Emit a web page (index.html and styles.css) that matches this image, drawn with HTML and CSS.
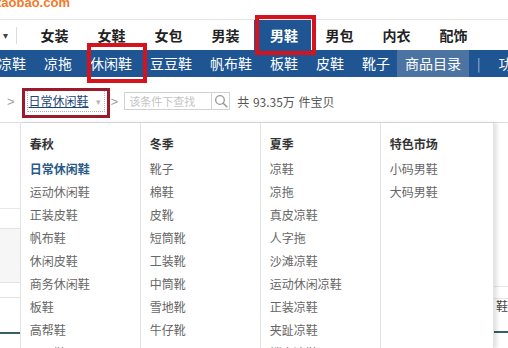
FILE: index.html
```html
<!DOCTYPE html>
<html lang="zh-CN">
<head>
<meta charset="utf-8">
<title>淘宝 男鞋</title>
<link rel="stylesheet" href="styles.css">
</head>
<body>
<div class="page">
  <div class="logo"><span class="logo-text">taobao.com</span></div>

  <div class="cats">
    <span class="cats-arrow">▾</span>
    <span class="cats-sep"></span>
    <ul class="cats-list">
      <li>女装</li>
      <li>女鞋</li>
      <li>女包</li>
      <li>男装</li>
      <li class="on">男鞋</li>
      <li>男包</li>
      <li>内衣</li>
      <li>配饰</li>
    </ul>
  </div>

  <ul class="subnav">
    <li class="first">凉鞋</li>
    <li>凉拖</li>
    <li class="sel">休闲鞋</li>
    <li>豆豆鞋</li>
    <li>帆布鞋</li>
    <li>板鞋</li>
    <li>皮鞋</li>
    <li>靴子</li>
    <li class="catalog">商品目录</li>
    <li class="pipe">|</li>
    <li>功</li>
  </ul>

  <div class="crumbs">
    <span class="gt">&gt;</span>
    <span class="select"><span class="select-text">日常休闲鞋</span><span class="select-arrow">▾</span></span>
    <span class="gt gt2">&gt;</span>
    <span class="search">
      <span class="search-input">该条件下查找</span>
      <span class="search-btn">
        <svg width="14" height="14" viewBox="0 0 14 14"><circle cx="6" cy="6" r="4.3" fill="none" stroke="#9a9a9a" stroke-width="1.3"/><line x1="9.2" y1="9.2" x2="12.8" y2="12.8" stroke="#9a9a9a" stroke-width="1.6" stroke-linecap="round"/></svg>
      </span>
    </span>
    <span class="total">共 93.35万 件宝贝</span>
  </div>

  <div class="main">
    <div class="under-left">
      <div class="ul-a"></div>
      <div class="ul-b"></div>
      <div class="ul-c"></div>
      <div class="ul-d"></div>
      <div class="ul-e"></div>
      <div class="ul-f"></div>
    </div>

    <div class="panel">
      <div class="col">
        <h3 class="col-head">春秋</h3>
        <ul class="col-list">
          <li class="cur">日常休闲鞋</li>
          <li>运动休闲鞋</li>
          <li>正装皮鞋</li>
          <li>帆布鞋</li>
          <li>休闲皮鞋</li>
          <li>商务休闲鞋</li>
          <li>板鞋</li>
          <li>高帮鞋</li>
          <li>豆豆鞋</li>
        </ul>
      </div>
      <div class="col">
        <h3 class="col-head">冬季</h3>
        <ul class="col-list">
          <li>靴子</li>
          <li>棉鞋</li>
          <li>皮靴</li>
          <li>短筒靴</li>
          <li>工装靴</li>
          <li>中筒靴</li>
          <li>雪地靴</li>
          <li>牛仔靴</li>
        </ul>
      </div>
      <div class="col">
        <h3 class="col-head">夏季</h3>
        <ul class="col-list">
          <li>凉鞋</li>
          <li>凉拖</li>
          <li>真皮凉鞋</li>
          <li>人字拖</li>
          <li>沙滩凉鞋</li>
          <li>运动休闲凉鞋</li>
          <li>正装凉鞋</li>
          <li>夹趾凉鞋</li>
          <li>镂空凉鞋</li>
        </ul>
      </div>
      <div class="col">
        <h3 class="col-head">特色市场</h3>
        <ul class="col-list">
          <li>小码男鞋</li>
          <li>大码男鞋</li>
        </ul>
      </div>
    </div>

    <div class="under-right">
      <div class="ur-a"></div>
      <div class="ur-b"></div>
      <div class="ur-c">鞋</div>
      <div class="ur-d"></div>
    </div>
  </div>

  <div class="mark mark-nanxie"></div>
  <div class="mark mark-xiuxian"></div>
  <div class="mark dark mark-crumb"></div>
  <div class="mark dark mark-chunqiu"></div>
</div>
</body>
</html>
```

FILE: styles.css
```css
* { box-sizing: border-box; }
html, body { margin: 0; padding: 0; background: #fff; }
body {
  width: 508px;
  height: 348px;
  overflow: hidden;
  font-family: "Noto Sans CJK SC", "Noto Sans", sans-serif;
  color: #333;
}
ul { list-style: none; margin: 0; padding: 0; }
h3 { margin: 0; }

.page { position: relative; width: 508px; height: 348px; overflow: hidden; }

/* logo */
.logo { height: 19px; overflow: hidden; }
.logo-text {
  display: block;
  margin: -4px 0 0 -3px;
  font-family: "Liberation Sans", Arial, sans-serif;
  font-weight: bold;
  font-size: 13px;
  line-height: 13px;
  color: #f07a2a;
}

/* top categories */
.cats {
  height: 31px;
  border-top: 1px solid #e6e6e6;
  display: flex;
  align-items: center;
  padding-left: 1px;
}
.cats-arrow { width: 8px; font-size: 10px; color: #444; text-align: center; line-height: 30px; }
.cats-sep { width: 1px; height: 17px; background: #dcdcdc; margin-left: 7px; }
.cats-list { display: flex; margin-left: 9px; height: 30px; }
.cats-list li {
  width: 57px;
  text-align: center;
  font-size: 14px;
  font-weight: bold;
  line-height: 30px;
  color: #222;
}
.cats-list li.on { background: #1f5592; color: #fff; padding-left: 3px; }

/* blue sub navigation */
.subnav {
  height: 27px;
  background: #1f5592;
  display: flex;
  gap: 18px;
  color: #fff;
  font-size: 14px;
  line-height: 27px;
  white-space: nowrap;
}
.subnav li.first { margin-left: -2px; }
.subnav li.catalog { margin-left: -11px; padding: 0 8px; background: #4b74a2; }
.subnav li.pipe { margin-left: -10px; color: #a8bdd6; font-size: 13px; }

/* breadcrumb row */
.crumbs {
  height: 46px;
  border-bottom: 1px solid #dedede;
  display: flex;
  align-items: center;
  padding: 3px 0 0 7px;
  font-size: 12px;
}
.gt { color: #a0a0a0; font-size: 13px; font-family: "Liberation Sans", sans-serif; }
.select {
  margin-left: 12px;
  width: 78px;
  height: 22px;
  border: 1px dotted #b0b0b0;
  display: flex;
  align-items: center;
  padding-left: 1px;
}
.select-text { color: #1b4679; text-decoration: underline; font-size: 12px; line-height: 16px; }
.select-arrow { margin-left: 7px; color: #b5b5b5; font-size: 9px; }
.gt2 { margin-left: 6px; }
.search {
  margin-left: 6px;
  width: 106px;
  height: 18px;
  border: 1px solid #d2d2d2;
  display: flex;
}
.search-input {
  width: 87px;
  border-right: 1px solid #d2d2d2;
  color: #c4c4c4;
  font-size: 11px;
  line-height: 16px;
  padding-left: 4px;
  white-space: nowrap;
  overflow: hidden;
}
.search-btn { flex: 1; display: flex; align-items: center; justify-content: center; }
.total { margin-left: 7px; color: #555; font-size: 12px; word-spacing: 1px; }

/* main area */
.main { display: flex; height: 225px; }

.under-left { width: 20px; display: flex; flex-direction: column; }
.ul-a { height: 85px; }
.ul-b { height: 20px; border-top: 1px solid #e8e8e8; }
.ul-c { height: 54px; border-top: 1px solid #e2e2e2; background: #f6f6f6; }
.ul-d { height: 15px; border-top: 1px solid #e2e2e2; }
.ul-e { height: 35px; border-top: 1px solid #e2e2e2; }
.ul-f { height: 2px; background: #365f66; }

.panel {
  width: 480px;
  display: grid;
  grid-template-columns: 120px 120px 120px 1fr;
  border-right: 1px solid #e3e3e3;
  box-shadow: 3px 0 4px rgba(0, 0, 0, 0.12);
  position: relative;
  z-index: 1;
  background: #fff;
}
.col { border-left: 1px solid #e3e3e3; padding: 11px 0 0 9px; }
.col-head { font-size: 12px; font-weight: bold; line-height: 20px; color: #333; margin-bottom: 3px; }
.col-list li { font-size: 12px; line-height: 23px; color: #666; white-space: nowrap; }
.col-list li.cur { font-weight: bold; color: #2b5a88; }

.under-right { flex: 1; display: flex; flex-direction: column; }
.ur-a { height: 164px; border-bottom: 1px solid #e6e6e6; }
.ur-b { height: 12px; border-bottom: 1px solid #e6e6e6; }
.ur-c { height: 32px; font-size: 12px; line-height: 14px; color: #444; padding-left: 2px; white-space: nowrap; }
.ur-d { height: 2px; background: #365f66; }

/* red annotation boxes laid over the screenshot */
.mark { position: absolute; border: 4px solid #d6121c; pointer-events: none; }
.mark.dark { border: 3px solid #9b1b2b; }
.mark-nanxie { left: 255px; top: 15px; width: 61px; height: 40px; }
.mark-xiuxian { left: 87px; top: 43px; width: 60px; height: 40px; }
.mark-crumb { left: 22px; top: 88px; width: 88px; height: 30px; }
.mark-chunqiu { left: 25px; top: 130px; width: 43px; height: 27px; }
```
